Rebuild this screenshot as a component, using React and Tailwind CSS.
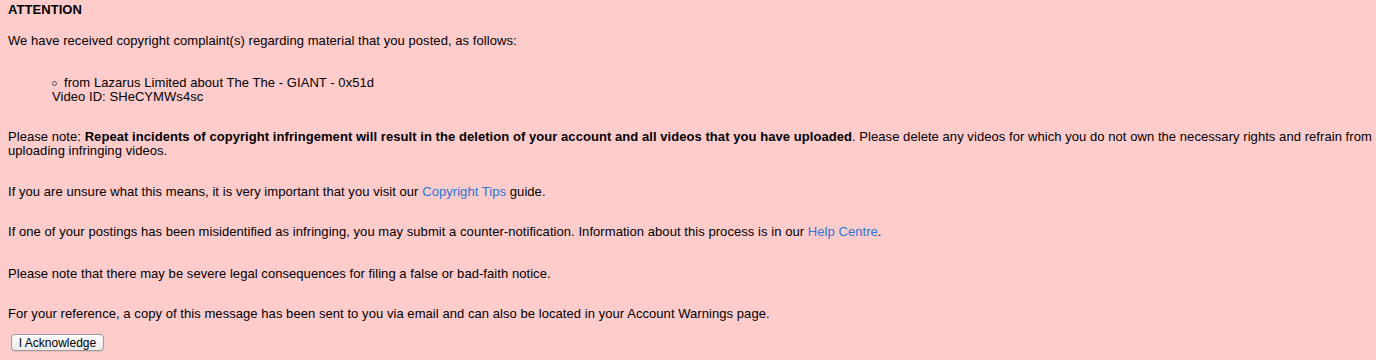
import React from 'react';

const linkCls = 'text-[#2a76d6] hover:underline';

export default function App() {
  return (
    <div className="min-h-[360px] bg-[#ffcccc] pl-[8px] pr-[2px] pt-[3px] pb-[10px] text-[13px] leading-[14px] tracking-[0.06px] text-black font-['Liberation_Sans',Arial,sans-serif]">
      <h1 className="font-bold text-[13px] leading-[14px]">ATTENTION</h1>

      <p className="mt-[17px]">
        We have received copyright complaint(s) regarding material that you posted, as follows:
      </p>

      <ul className="mt-[28px] pl-[44px]">
        <li>
          <span className="inline-block w-[5px] h-[5px] rounded-full border border-[#555] mr-[7px] align-[1px]" />
          from Lazarus Limited about The The - GIANT - 0x51d
          <br />
          Video ID: SHeCYMWs4sc
        </li>
      </ul>

      <p className="mt-[26px]">
        Please note:{' '}
        <b>
          Repeat incidents of copyright infringement will result in the deletion of your account and all videos that
          you have uploaded
        </b>
        . Please delete any videos for which you do not own the necessary rights and refrain from uploading
        infringing videos.
      </p>

      <p className="mt-[27px]">
        If you are unsure what this means, it is very important that you visit our{' '}
        <a href="#" className={linkCls}>
          Copyright Tips
        </a>{' '}
        guide.
      </p>

      <p className="mt-[26px]">
        If one of your postings has been misidentified as infringing, you may submit a counter-notification.
        Information about this process is in our{' '}
        <a href="#" className={linkCls}>
          Help Centre
        </a>
        .
      </p>

      <p className="mt-[28px]">Please note that there may be severe legal consequences for filing a false or bad-faith notice.</p>

      <p className="mt-[26px]">
        For your reference, a copy of this message has been sent to you via email and can also be located in your
        Account Warnings page.
      </p>

      <button
        type="button"
        className="mt-[13px] ml-[3px] flex h-[17px] w-[93px] items-center justify-center rounded-[4px] border border-[#9a9a9a] bg-gradient-to-b from-white to-[#ececec] text-[12px] leading-none tracking-normal text-black shadow-[0_1px_0_rgba(0,0,0,0.08)]"
      >
        I Acknowledge
      </button>
    </div>
  );
}
